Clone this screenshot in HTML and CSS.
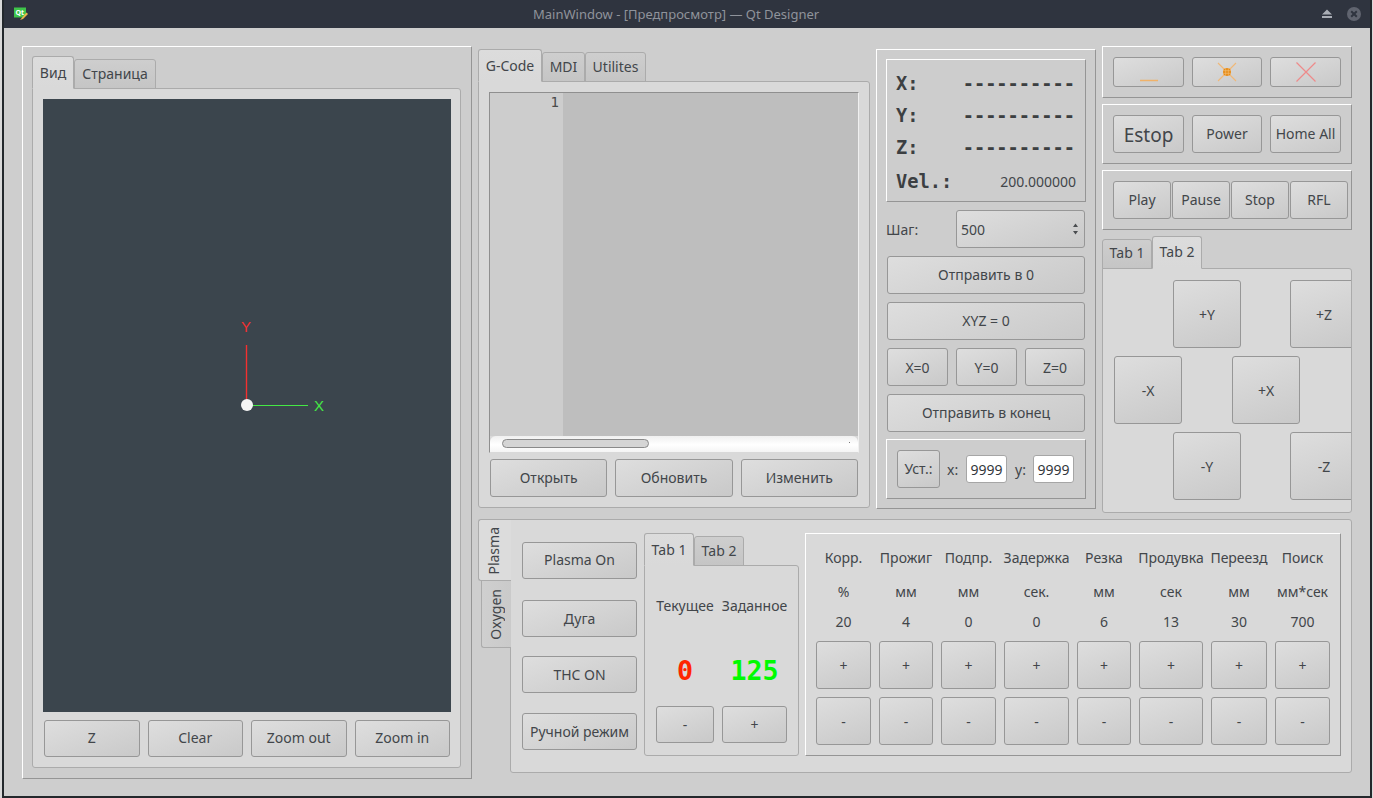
FILE: index.html
```html
<!DOCTYPE html>
<html lang="ru">
<head>
<meta charset="utf-8">
<title>MainWindow - [Предпросмотр] — Qt Designer</title>
<link rel="stylesheet" href="styles.css">
</head>
<body>
<div class="window">
  <header class="titlebar">
    <svg class="qt-logo" width="16" height="14" viewBox="0 0 16 14">
      <path d="M1 0.5H13V8L11 10.5H1Z" fill="#3fc64a"/>
      <text x="2.5" y="7.5" class="qt-text">Qt</text>
      <path d="M7 13L9 10.5L13.5 5.5L15 7L10 12Z" fill="#e8b84a"/>
    </svg>
    <span class="title">MainWindow - [Предпросмотр] — Qt Designer</span>
    <div class="wm-buttons">
      <svg width="14" height="12" viewBox="0 0 14 12"><path d="M7 1.5L12 6.5H2Z M2 8H12V10H2Z" fill="#a9adb5"/></svg>
      <svg width="16" height="16" viewBox="0 0 16 16"><circle cx="8" cy="8" r="7" fill="#60646f"/><path d="M5.2 5.2L10.8 10.8M10.8 5.2L5.2 10.8" stroke="#2f343f" stroke-width="2"/></svg>
    </div>
  </header>

  <main class="content">
    <section class="frame view-frame">
      <div class="tabs">
        <div class="tab active view-tab1">Вид</div>
        <div class="tab view-tab2">Страница</div>
      </div>
      <div class="pane view-pane">
        <div class="canvas">
          <svg class="axes" width="408" height="613" viewBox="0 0 408 613">
            <line x1="203.5" y1="246" x2="203.5" y2="302" stroke="#f43030" stroke-width="1.4"/>
            <line x1="208" y1="306.5" x2="265" y2="306.5" stroke="#45e845" stroke-width="1"/>
            <text x="198" y="233" class="axis axis-y">Y</text>
            <text x="271" y="312" class="axis axis-x">X</text>
            <circle cx="204" cy="306" r="6" fill="#f4f4f4"/>
          </svg>
        </div>
        <div class="view-buttons">
          <button class="btn">Z</button>
          <button class="btn">Clear</button>
          <button class="btn">Zoom out</button>
          <button class="btn">Zoom in</button>
        </div>
      </div>
    </section>

    <div class="right-area">
      <div class="top-row">
        <section class="gcode">
          <div class="tabs">
            <div class="tab active gcode-tab1">G-Code</div>
            <div class="tab gcode-tab2">MDI</div>
            <div class="tab gcode-tab3">Utilites</div>
          </div>
          <div class="pane gcode-pane">
            <div class="editor">
              <div class="editor-body">
                <div class="gutter">1</div>
                <div class="code"></div>
              </div>
              <div class="hscroll"><div class="hthumb"></div><div class="hdot"></div></div>
            </div>
            <div class="gcode-buttons">
              <button class="btn">Открыть</button>
              <button class="btn">Обновить</button>
              <button class="btn">Изменить</button>
            </div>
          </div>
        </section>

        <section class="frame dro-frame">
          <div class="frame dro">
            <div class="dro-row"><span class="mono">X:</span><span class="mono dash">----------</span></div>
            <div class="dro-row"><span class="mono">Y:</span><span class="mono dash">----------</span></div>
            <div class="dro-row"><span class="mono">Z:</span><span class="mono dash">----------</span></div>
            <div class="dro-row vel"><span class="mono">Vel.:</span><span>200.000000</span></div>
          </div>
          <div class="step-row">
            <span>Шаг:</span>
            <div class="combo">500
              <svg width="7" height="14" viewBox="0 0 7 14"><path d="M3.5 1.5L6 5H1Z M3.5 12.5L1 9H6Z" fill="#4a4d50"/></svg>
            </div>
          </div>
          <button class="btn wide">Отправить в 0</button>
          <button class="btn wide">XYZ = 0</button>
          <div class="zero-row">
            <button class="btn">X=0</button>
            <button class="btn">Y=0</button>
            <button class="btn">Z=0</button>
          </div>
          <button class="btn wide">Отправить в конец</button>
          <div class="frame set-row">
            <button class="btn">Уст.:</button>
            <span class="set-x">x:</span>
            <div class="num-input">9999</div>
            <span class="set-y">y:</span>
            <div class="num-input">9999</div>
          </div>
        </section>

        <section class="control-col">
          <div class="frame ctrl-frame win-row">
            <button class="btn">
              <svg width="20" height="24" viewBox="0 0 20 24"><line x1="1" y1="20.5" x2="19" y2="20.5" stroke="#f0b26a" stroke-width="1.3"/></svg>
            </button>
            <button class="btn">
              <svg width="22" height="22" viewBox="0 0 22 22"><path d="M2 2L20 20M20 2L2 20" stroke="#f0b878" stroke-width="1.1"/><circle cx="11" cy="11" r="4" fill="#e88a14"/><path d="M9.7 7V15M12.3 7V15M7 9.7H15M7 12.3H15" stroke="#f4c27a" stroke-width=".6"/></svg>
            </button>
            <button class="btn">
              <svg width="22" height="22" viewBox="0 0 22 22"><path d="M1.5 1.5L20.5 20.5M20.5 1.5L1.5 20.5" stroke="#ee8a8a" stroke-width="1.2"/></svg>
            </button>
          </div>
          <div class="frame ctrl-frame main-row">
            <button class="btn estop">Estop</button>
            <button class="btn">Power</button>
            <button class="btn">Home All</button>
          </div>
          <div class="frame ctrl-frame play-row">
            <button class="btn">Play</button>
            <button class="btn">Pause</button>
            <button class="btn">Stop</button>
            <button class="btn">RFL</button>
          </div>
          <div class="tabs jog-tabs">
            <div class="tab jog-tab1">Tab 1</div>
            <div class="tab active jog-tab2">Tab 2</div>
          </div>
          <div class="pane jog-pane">
            <button class="btn jog c2 r1">+Y</button>
            <button class="btn jog c4 r1">+Z</button>
            <button class="btn jog c1 r2">-X</button>
            <button class="btn jog c3 r2">+X</button>
            <button class="btn jog c2 r3">-Y</button>
            <button class="btn jog c4 r3">-Z</button>
          </div>
        </section>
      </div>

      <section class="bottom">
        <div class="vtabs">
          <div class="vtab active plasma-tab"><span>Plasma</span></div>
          <div class="vtab oxygen-tab"><span>Oxygen</span></div>
        </div>
        <div class="pane bottom-pane">
          <div class="plasma-buttons">
            <button class="btn plasma-on">Plasma On</button>
            <button class="btn">Дуга</button>
            <button class="btn">THC ON</button>
            <button class="btn">Ручной режим</button>
          </div>
          <div class="current">
            <div class="tabs">
              <div class="tab active cur-tab1">Tab 1</div>
              <div class="tab cur-tab2">Tab 2</div>
            </div>
            <div class="pane cur-pane">
              <span class="cell cur-label">Текущее</span>
              <span class="cell cur-label">Заданное</span>
              <span class="cell big red">0</span>
              <span class="cell big green">125</span>
              <button class="btn">-</button>
              <button class="btn">+</button>
            </div>
          </div>
          <div class="frame params">
            <span class="cell">Корр.</span><span class="cell">Прожиг</span><span class="cell">Подпр.</span><span class="cell">Задержка</span><span class="cell">Резка</span><span class="cell">Продувка</span><span class="cell">Переезд</span><span class="cell">Поиск</span>
            <span class="cell">%</span><span class="cell">мм</span><span class="cell">мм</span><span class="cell">сек.</span><span class="cell">мм</span><span class="cell">сек</span><span class="cell">мм</span><span class="cell">мм*сек</span>
            <span class="cell val">20</span><span class="cell val">4</span><span class="cell val">0</span><span class="cell val">0</span><span class="cell val">6</span><span class="cell val">13</span><span class="cell val">30</span><span class="cell val">700</span>
            <button class="btn">+</button><button class="btn">+</button><button class="btn">+</button><button class="btn">+</button><button class="btn">+</button><button class="btn">+</button><button class="btn">+</button><button class="btn">+</button>
            <button class="btn minus">-</button><button class="btn minus">-</button><button class="btn minus">-</button><button class="btn minus">-</button><button class="btn minus">-</button><button class="btn minus">-</button><button class="btn minus">-</button><button class="btn minus">-</button>
          </div>
        </div>
      </section>
    </div>
  </main>
</div>
</body>
</html>
```
FILE: styles.css
```css
* { box-sizing: border-box; }
html, body { margin: 0; height: 100%; overflow: hidden; }
body {
  width: 1373px; height: 798px;
  background: #d9d9d9;
  font: 14px "Noto Sans", sans-serif;
  color: #42464a;
}
.window {
  margin-left: 2px; width: 1370px; height: 798px;
  border: 2px solid #23282c; border-top: 0;
  background: #cecece;
  display: flex; flex-direction: column;
}
.titlebar {
  height: 28px; flex: none;
  background: #2f343f;
  display: flex; align-items: center;
  padding-left: 9px;
  color: #8f939b; font-size: 13px;
}
.qt-logo { width: 16px; flex: none; margin-top: -1px; }
.qt-text { font: bold 7px "Noto Sans", sans-serif; fill: #fff; }
.title { margin-left: 504px; }
.wm-buttons { margin-left: auto; display: flex; align-items: center; gap: 12px; padding-right: 8px; }
.content { flex: 1; display: flex; align-items: flex-start; padding: 18px 0 0 18px; }

.frame {
  border: 1px solid; border-color: #fff #959595 #959595 #fff;
  background: #cdcdcd;
}
.pane {
  border: 1px solid #ababab; border-radius: 0 3px 3px 3px;
  background: #d9d9d9;
}
.btn {
  margin: 0; padding: 0 0 2px;
  border: 1px solid #979797; border-radius: 3px;
  background: linear-gradient(160deg, #dedede, #c9c9c9);
  font: 14px "Noto Sans", sans-serif; color: #42464a;
  display: flex; align-items: center; justify-content: center;
  white-space: nowrap;
}
.tabs { display: flex; align-items: flex-end; position: relative; z-index: 1; margin-bottom: -1px; }
.tab {
  height: 30px; padding-top: 2px;
  border: 1px solid #ababab; border-radius: 3px 3px 0 0;
  background: linear-gradient(#cecece, #c5c5c5);
  text-align: center; line-height: 24px;
}
.tab.active {
  height: 33px; padding-top: 4px; line-height: 24px;
  background: linear-gradient(#dcdcdc, #d9d9d9);
  border-bottom-color: #d9d9d9;
}

.view-frame { width: 450px; height: 733px; padding: 9px 10px 0 9px; flex: none; }
.view-tab1 { width: 42px; }
.view-tab2 { width: 82px; margin-left: 0; }
.view-pane { height: 680px; padding: 10px 9px 0 10px; }
.canvas { height: 613px; background: #3b454d; }
.axes { display: block; }
.axis { font: 15px "Liberation Sans", sans-serif; }
.axis-y { fill: #f43030; }
.axis-x { fill: #45e845; }
.view-buttons { display: grid; grid-template-columns: repeat(4, 1fr); gap: 8px; padding: 0 1px; margin-top: 8px; }
.view-buttons .btn { height: 37px; }

.right-area { width: 874px; margin-left: 6px; flex: none; }
.top-row { display: flex; align-items: flex-start; height: 467px; margin-bottom: 6px; }
.gcode { width: 392px; margin-top: 3px; flex: none; }
.gcode-tab1 { width: 64px; }
.gcode-tab2 { width: 43px; }
.gcode-tab3 { width: 61px; }
.gcode-pane { height: 427px; padding: 10px 10px 0; }
.editor { height: 361px; border: 1px solid; border-color: #8f8f8f #f0f0f0 transparent #8f8f8f; display: flex; flex-direction: column; }
.editor-body { flex: 1; display: flex; }
.gutter {
  width: 73px; background: #cdcdcd; text-align: right; padding-right: 4px;
  font: 14px/18px "DejaVu Sans Mono", monospace; color: #4a4a4a;
}
.code { flex: 1; background: #bebebe; }
.hscroll {
  height: 16px; flex: none; border-radius: 6px 6px 0 0;
  background: linear-gradient(#f0f0f0, #fff 55%, #f4f4f4);
  display: flex; align-items: flex-start; padding: 3px 8px 0 12px;
}
.hthumb { width: 147px; height: 9px; border: 1px solid #8a8a8a; border-radius: 5px; background: #d5d5d5; }
.hdot { width: 1px; height: 1px; background: #777; margin: 3px 0 0 auto; }
.gcode-buttons { display: grid; grid-template-columns: repeat(3, 1fr); gap: 8px; margin-top: 6px; padding: 0 1px; }
.gcode-buttons .btn { height: 38px; }

.dro-frame { width: 220px; height: 460px; margin: 3px 0 0 6px; padding: 9px 9px 0; flex: none; display: flex; flex-direction: column; }
.dro { height: 143px; padding: 7px 9px 0; margin-bottom: 8px; flex: none; }
.dro-row { height: 32px; display: flex; justify-content: space-between; align-items: center; }
.dro-row.vel { height: 36px; }
.mono { font: bold 18.67px "DejaVu Sans Mono", monospace; color: #3c3f42; }
.dash { margin-right: 1px; }
.step-row { display: flex; align-items: center; justify-content: space-between; padding-right: 1px; height: 38px; flex: none; }
.combo {
  width: 129px; height: 38px; padding: 0 5px 0 4px;
  border: 1px solid #979797; border-radius: 3px;
  background: linear-gradient(160deg, #dedede, #c9c9c9);
  display: flex; align-items: center; justify-content: space-between;
}
.wide { height: 38px; flex: none; margin: 8px 1px 0; }
.zero-row { display: grid; grid-template-columns: 61px 61px 60px; gap: 8px; margin: 8px 1px 0; flex: none; }
.zero-row .btn { height: 38px; padding: 0; }
.set-row {
  margin-top: 7px; height: 60px; flex: none;
  padding: 0 0 0 10px;
  display: grid; grid-template-columns: 43px 26px 41px 26px 41px; align-items: center;
}
.set-row .btn { height: 38px; }
.set-x { padding-left: 7px; }
.set-y { padding-left: 8px; }
.num-input {
  height: 28px; background: #fff; border: 1px solid #a6a6a6; border-radius: 3px;
  display: flex; align-items: center; justify-content: center; color: #33373b;
}

.control-col { width: 250px; margin-left: 6px; flex: none; }
.ctrl-frame { display: grid; padding: 10px 0 0 10px; margin-bottom: 6px; }
.ctrl-frame .btn { height: 38px; }
.win-row { height: 52px; grid-template-columns: 71px 70px 71px; gap: 8px; }
.win-row .btn { height: 30px; overflow: hidden; padding: 0; }
.main-row { height: 60px; grid-template-columns: 71px 70px 71px; gap: 8px; }
.play-row { height: 60px; grid-template-columns: repeat(4, 58px); gap: 1px; margin-bottom: 0; }
.estop { font-size: 19px; padding: 2px 0 0; }
.jog-tabs { margin-top: 6px; }
.jog-tab1 { width: 50px; height: 30px; padding-top: 1px; }
.tab.active.jog-tab2 { width: 50px; height: 33px; padding-top: 3px; }
.jog-pane {
  height: 245px; padding: 11px 0 0 11px; border-radius: 0 3px 3px 3px;
  overflow: hidden;
  display: grid; grid-template-columns: 59px 59px 58px 59px; grid-auto-rows: 68px; row-gap: 8px;
}
.jog { width: 68px; height: 68px; padding: 0; }
.c1 { grid-column: 1; } .c2 { grid-column: 2; } .c3 { grid-column: 3; } .c4 { grid-column: 4; }
.r1 { grid-row: 1; } .r2 { grid-row: 2; } .r3 { grid-row: 3; }

.bottom { display: flex; align-items: flex-start; }
.vtabs { width: 33px; flex: none; margin-right: -1px; position: relative; z-index: 1; display: flex; flex-direction: column; align-items: flex-end; }
.vtab {
  border: 1px solid #ababab; border-right: 0; border-radius: 3px 0 0 3px;
  display: flex; align-items: center; justify-content: center;
  padding-right: 3px;
}
.vtab span { writing-mode: vertical-rl; transform: rotate(180deg); }
.plasma-tab { width: 33px; height: 62px; background: #dcdcdc; border-bottom-color: #ababab; padding-top: 2px; }
.oxygen-tab { width: 30px; height: 67px; background: linear-gradient(90deg, #cfcfcf, #cacaca); border-top: 0; border-radius: 0 0 0 3px; }
.bottom-pane {
  width: 842px; height: 254px; border-radius: 0 3px 3px 3px;
  padding: 13px 0 0 11px;
  display: flex; align-items: flex-start;
}
.plasma-buttons {
  width: 115px; padding-top: 9px; flex: none;
  display: grid; grid-template-rows: 58px 56px 57px 37px;
}
.plasma-buttons .btn { height: 37px; padding: 0; }
.plasma-buttons .plasma-on { padding-bottom: 2px; }
.current { width: 155px; margin-left: 7px; flex: none; }
.cur-tab1 { width: 50px; }
.cur-tab2 { width: 50px; }
.cur-pane {
  height: 191px; padding-left: 11px;
  display: grid; grid-template-columns: 58px 65px; column-gap: 8px;
  grid-template-rows: 80px 48px 37px; row-gap: 0;
  align-items: center;
}
.cur-label { padding-bottom: 2px; }
.cur-pane .btn { height: 37px; margin-top: 12px; grid-row: 3; align-self: start; padding: 0; }
.cell { white-space: nowrap; justify-self: center; }
.big { font: bold 26.67px "DejaVu Sans Mono", monospace; }
.red { color: #ff2500; }
.green { color: #00fb00; }
.params {
  width: 536px; height: 223px; margin-left: 6px; flex: none; margin-top: 0;
  background: #d9d9d9;
  padding: 6px 0 0 10px;
  display: grid;
  grid-template-columns: 55px 54px 55px 65px 54px 64px 56px 55px;
  column-gap: 8px;
  grid-template-rows: 34px 34px 33px 48px 56px;
  align-items: center;
}
.params .cell { justify-self: center; }
.val { padding-bottom: 7px; }
.params .btn { height: 48px; padding: 0; }
.params .btn.minus { margin-top: 8px; }
```
